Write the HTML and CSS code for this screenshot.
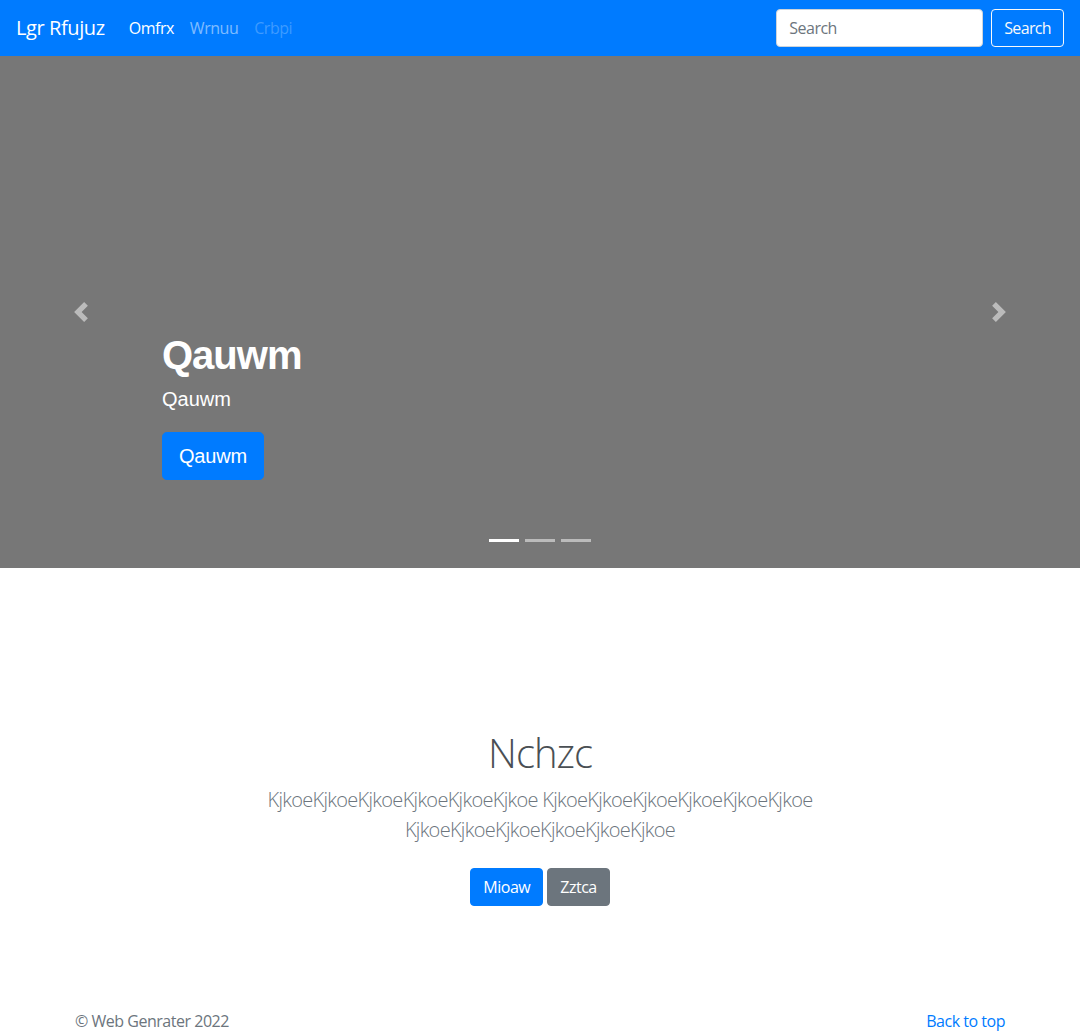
FILE: index.html
```html
<!DOCTYPE html>
<html lang="en">
<head>
<meta charset="utf-8">
<title>Lgr Rfujuz</title>
<link rel="stylesheet" href="styles.css">
</head>
<body>
<header class="navbar">
  <a class="brand" href="#">Lgr Rfujuz</a>
  <nav class="nav">
    <a class="nav-link active" href="#">Omfrx</a>
    <a class="nav-link" href="#">Wrnuu</a>
    <a class="nav-link disabled" href="#">Crbpi</a>
  </nav>
  <form class="search">
    <input class="search-input" type="text" placeholder="Search">
    <button class="btn-outline-light" type="button">Search</button>
  </form>
</header>

<section class="carousel">
  <div class="slide">
    <div class="caption">
      <h1 class="caption-title">Qauwm</h1>
      <p class="caption-text">Qauwm</p>
      <a class="btn-lg" href="#">Qauwm</a>
    </div>
  </div>
  <a class="control control-prev" href="#" aria-label="Previous">
    <svg width="20" height="20" viewBox="0 0 8 8"><path fill="#fff" d="M5.25 0l-4 4 4 4 1.5-1.5L4.25 4l2.5-2.5L5.25 0z"/></svg>
  </a>
  <a class="control control-next" href="#" aria-label="Next">
    <svg width="20" height="20" viewBox="0 0 8 8"><path fill="#fff" d="M2.75 0l-1.5 1.5L3.75 4l-2.5 2.5L2.75 8l4-4-4-4z"/></svg>
  </a>
  <ol class="indicators">
    <li class="indicator active"></li>
    <li class="indicator"></li>
    <li class="indicator"></li>
  </ol>
</section>

<section class="intro">
  <h1 class="intro-title">Nchzc</h1>
  <p class="lead">KjkoeKjkoeKjkoeKjkoeKjkoeKjkoe KjkoeKjkoeKjkoeKjkoeKjkoeKjkoe KjkoeKjkoeKjkoeKjkoeKjkoeKjkoe</p>
  <p class="actions">
    <a class="btn btn-primary" href="#">Mioaw</a>
    <a class="btn btn-secondary" href="#">Zztca</a>
  </p>
</section>

<footer class="footer">
  <p class="copy">© Web Genrater 2022</p>
  <a class="back" href="#">Back to top</a>
</footer>
</body>
</html>
```

FILE: styles.css
```css
* { box-sizing: border-box; }

body {
  margin: 0;
  font-family: "Open Sans", "Noto Sans", "Liberation Sans", sans-serif;
  font-size: 16px;
  line-height: 1.5;
  letter-spacing: -0.03em;
  color: #212529;
  background: #fff;
}

a { text-decoration: none; }

.navbar {
  display: flex;
  align-items: center;
  height: 56px;
  padding: 8px 16px;
  background: #007bff;
}

.brand {
  font-size: 20px;
  line-height: 30px;
  letter-spacing: -0.02em;
  color: #fff;
  margin-right: 16px;
  padding: 5px 0;
}

.nav {
  display: flex;
  flex: 1;
}

.nav-link {
  padding: 8px;
  color: rgba(255,255,255,.5);
  font-size: 16px;
}
.nav-link.active { color: #fff; }
.nav-link.disabled { color: rgba(255,255,255,.25); }

.search {
  display: flex;
  align-items: center;
}

.search-input {
  width: 207px;
  height: 38px;
  padding: 6px 12px;
  margin-right: 8px;
  font: inherit;
  font-size: 16px;
  letter-spacing: -0.03em;
  color: #495057;
  background: #fff;
  border: 1px solid #ced4da;
  border-radius: 4px;
}
.search-input::placeholder { color: #6c757d; }

.btn-outline-light {
  height: 38px;
  padding: 6px 12px;
  font: inherit;
  font-size: 16px;
  letter-spacing: -0.04em;
  color: #f8f9fa;
  background: transparent;
  border: 1px solid #f8f9fa;
  border-radius: 4px;
}

.carousel {
  position: relative;
  height: 512px;
  background: #777;
}

.slide {
  height: 100%;
  display: flex;
  align-items: flex-end;
  padding: 0 15% 88px;
}

.caption {
  color: #fff;
  font-family: "Liberation Sans", Arial, sans-serif;
  letter-spacing: 0;
}

.caption-title {
  margin: 0 0 5px;
  font-size: 40px;
  line-height: 48px;
  font-weight: 700;
  letter-spacing: -1px;
}

.caption-text {
  margin: 0 0 18px;
  font-size: 20px;
  line-height: 30px;
}

.btn-lg {
  display: inline-block;
  padding: 8px 16px;
  font-size: 20px;
  line-height: 30px;
  letter-spacing: -0.2px;
  color: #fff;
  background: #007bff;
  border: 1px solid #007bff;
  border-radius: 4.8px;
}

.control {
  position: absolute;
  top: 0;
  bottom: 0;
  width: 15%;
  display: flex;
  align-items: center;
  justify-content: center;
  opacity: .5;
}
.control-prev { left: 0; }
.control-next { right: 0; }
.control svg { display: block; }

.indicators {
  position: absolute;
  left: 0;
  right: 0;
  bottom: 0;
  margin: 0 0 16px;
  padding: 0;
  list-style: none;
  display: flex;
  justify-content: center;
}

.indicator {
  width: 30px;
  height: 3px;
  margin: 10px 3px;
  background: #fff;
  opacity: .5;
}
.indicator.active { opacity: 1; }

.intro {
  padding: 161px 0 39px;
  text-align: center;
}

.intro-title {
  margin: 0 0 8px;
  font-size: 40px;
  line-height: 48px;
  font-weight: 300;
  letter-spacing: -0.025em;
  color: #4a4f54;
}

.lead {
  max-width: 630px;
  margin: 0 auto 16px;
  font-size: 20px;
  line-height: 30px;
  font-weight: 300;
  letter-spacing: -0.035em;
  color: #6c757d;
}

.actions {
  margin: 23px 0 16px;
  display: flex;
  justify-content: center;
  gap: 4px;
}

.btn {
  display: inline-block;
  padding: 6px 12px;
  font-size: 16px;
  line-height: 24px;
  color: #fff;
  border: 1px solid transparent;
  border-radius: 4px;
}
.btn-primary { background: #007bff; border-color: #007bff; }
.btn-secondary { background: #6c757d; border-color: #6c757d; }

.footer {
  width: 930px;
  margin: 0 auto;
  padding: 48px 0 0;
  display: flex;
  justify-content: space-between;
  color: #6c757d;
}

.copy { margin: 0; }
.back { color: #007bff; }
```
